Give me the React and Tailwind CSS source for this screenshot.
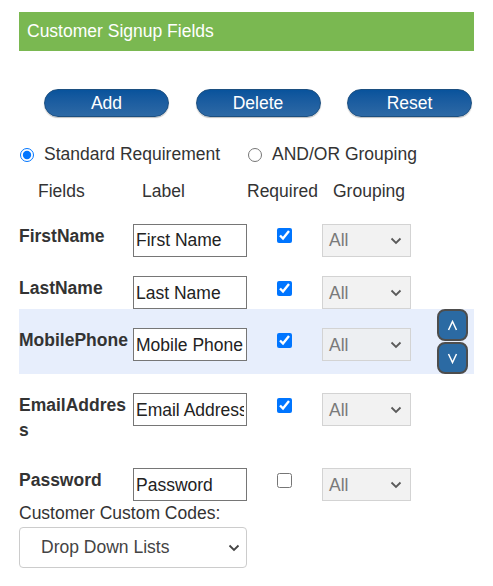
import React from "react";

function Chevron({ className }) {
  return (
    <svg width="12" height="8" viewBox="0 0 12 8" className={className}>
      <polyline points="1.5,1.5 6,6 10.5,1.5" fill="none" stroke="currentColor" strokeWidth="1.8" />
    </svg>
  );
}

function GroupSelect() {
  return (
    <div className="flex h-[33px] w-[89px] shrink-0 items-center justify-between border border-[#d3d3d3] bg-[rgba(239,239,239,0.8)] pl-[6px] pr-[8px] pt-[1px] text-[#7a7a7a]">
      <span>All</span>
      <Chevron className="text-[#5a5a5a]" />
    </div>
  );
}

function Row({ name, label, checked, h, highlight, arrows, first }) {
  return (
    <div className={`flex items-start ${h} ${highlight ? "bg-[#e7eefc]" : ""} ${first ? "mt-[1px]" : ""}`}>
      <div className="mt-[19px] w-[114px] shrink-0 break-all font-bold leading-[25px]">{name}</div>
      <input
        readOnly
        value={label}
        className="mt-[19px] h-[33px] w-[114px] shrink-0 border border-[#767676] bg-white px-[2px] pt-[1px] text-[17.5px] text-[#222] outline-none"
      />
      <div className="mt-[23.5px] w-[75px] shrink-0 pl-[29.5px]">
        <input
          type="checkbox"
          readOnly
          checked={checked}
          className="m-0 block h-[15px] w-[15px] accent-[#0075ff]"
        />
      </div>
      <div className="mt-[19px]">
        <GroupSelect />
      </div>
      {arrows && (
        <div className="ml-[26px] flex flex-col gap-[1px]">
          <div className="flex h-[32px] w-[31px] items-center justify-center rounded-[8px] border-2 border-[#4d4d4d] bg-[#2b6aa3]">
            <svg width="11" height="11" viewBox="0 0 11 11">
              <polyline points="1.5,10 5.5,1.5 9.5,10" fill="none" stroke="white" strokeWidth="1.5" />
            </svg>
          </div>
          <div className="flex h-[32px] w-[31px] items-center justify-center rounded-[8px] border-2 border-[#4d4d4d] bg-[#2b6aa3]">
            <svg width="11" height="11" viewBox="0 0 11 11">
              <polyline points="1.5,1 5.5,9.5 9.5,1" fill="none" stroke="white" strokeWidth="1.5" />
            </svg>
          </div>
        </div>
      )}
    </div>
  );
}

function Btn({ children }) {
  return (
    <button className="h-[28px] w-[125px] rounded-full border border-[#1c4f80] bg-gradient-to-b from-[#08539c] to-[#2d69a5] pt-[2px] text-[17.5px] leading-none text-white shadow-[0_1px_1px_rgba(0,0,0,0.25)]">
      {children}
    </button>
  );
}

export default function App() {
  return (
    <div className="h-[586px] w-[493px] bg-white font-['Liberation_Sans',Arial,sans-serif] text-[17.5px] text-[#333]">
      <div className="w-[474px] pl-[19px] pt-[12px]">
        <div className="flex h-[39px] items-center bg-[#7ab851] pl-[8px] text-white">
          Customer Signup Fields
        </div>

        <div className="mt-[38px] flex gap-[26.5px] pl-[25px]">
          <Btn>Add</Btn>
          <Btn>Delete</Btn>
          <Btn>Reset</Btn>
        </div>

        <div className="mt-[25px] flex h-[25px] items-center leading-[25px]">
          <div className="flex w-[228px] items-center">
            <input type="radio" readOnly checked name="req" className="m-0 ml-[1px] h-[14px] w-[14px] accent-[#0075ff]" />
            <span className="ml-[10px]">Standard Requirement</span>
          </div>
          <div className="flex items-center">
            <input type="radio" readOnly checked={false} name="req" className="m-0 ml-[1px] h-[14px] w-[14px]" />
            <span className="ml-[10px]">AND/OR Grouping</span>
          </div>
        </div>

        <div className="mt-[11.5px] flex h-[25px] leading-[25px]">
          <div className="w-[114px] pl-[19px]">Fields</div>
          <div className="w-[114px] pl-[9px]">Label</div>
          <div className="w-[75px]">Required</div>
          <div className="pl-[11px]">Grouping</div>
        </div>

        <Row first name="FirstName" label="First Name" checked h="h-[52.5px]" />
        <Row name="LastName" label="Last Name" checked h="h-[52px]" />
        <Row name="MobilePhone" label="Mobile Phone" checked h="h-[65px]" highlight arrows />
        <Row name="EmailAddress" label="Email Address" checked h="h-[75px]" />
        <Row name="Password" label="Password" checked={false} h="h-[52px]" />

        <div className="leading-[25px]">Customer Custom Codes:</div>
        <div className="mt-[1px] flex h-[41px] w-[228px] items-center justify-between rounded-[4px] border border-[#cccccc] pl-[21px] pr-[6px] text-[#444]">
          <span>Drop Down Lists</span>
          <Chevron className="text-[#444]" />
        </div>
      </div>
    </div>
  );
}
